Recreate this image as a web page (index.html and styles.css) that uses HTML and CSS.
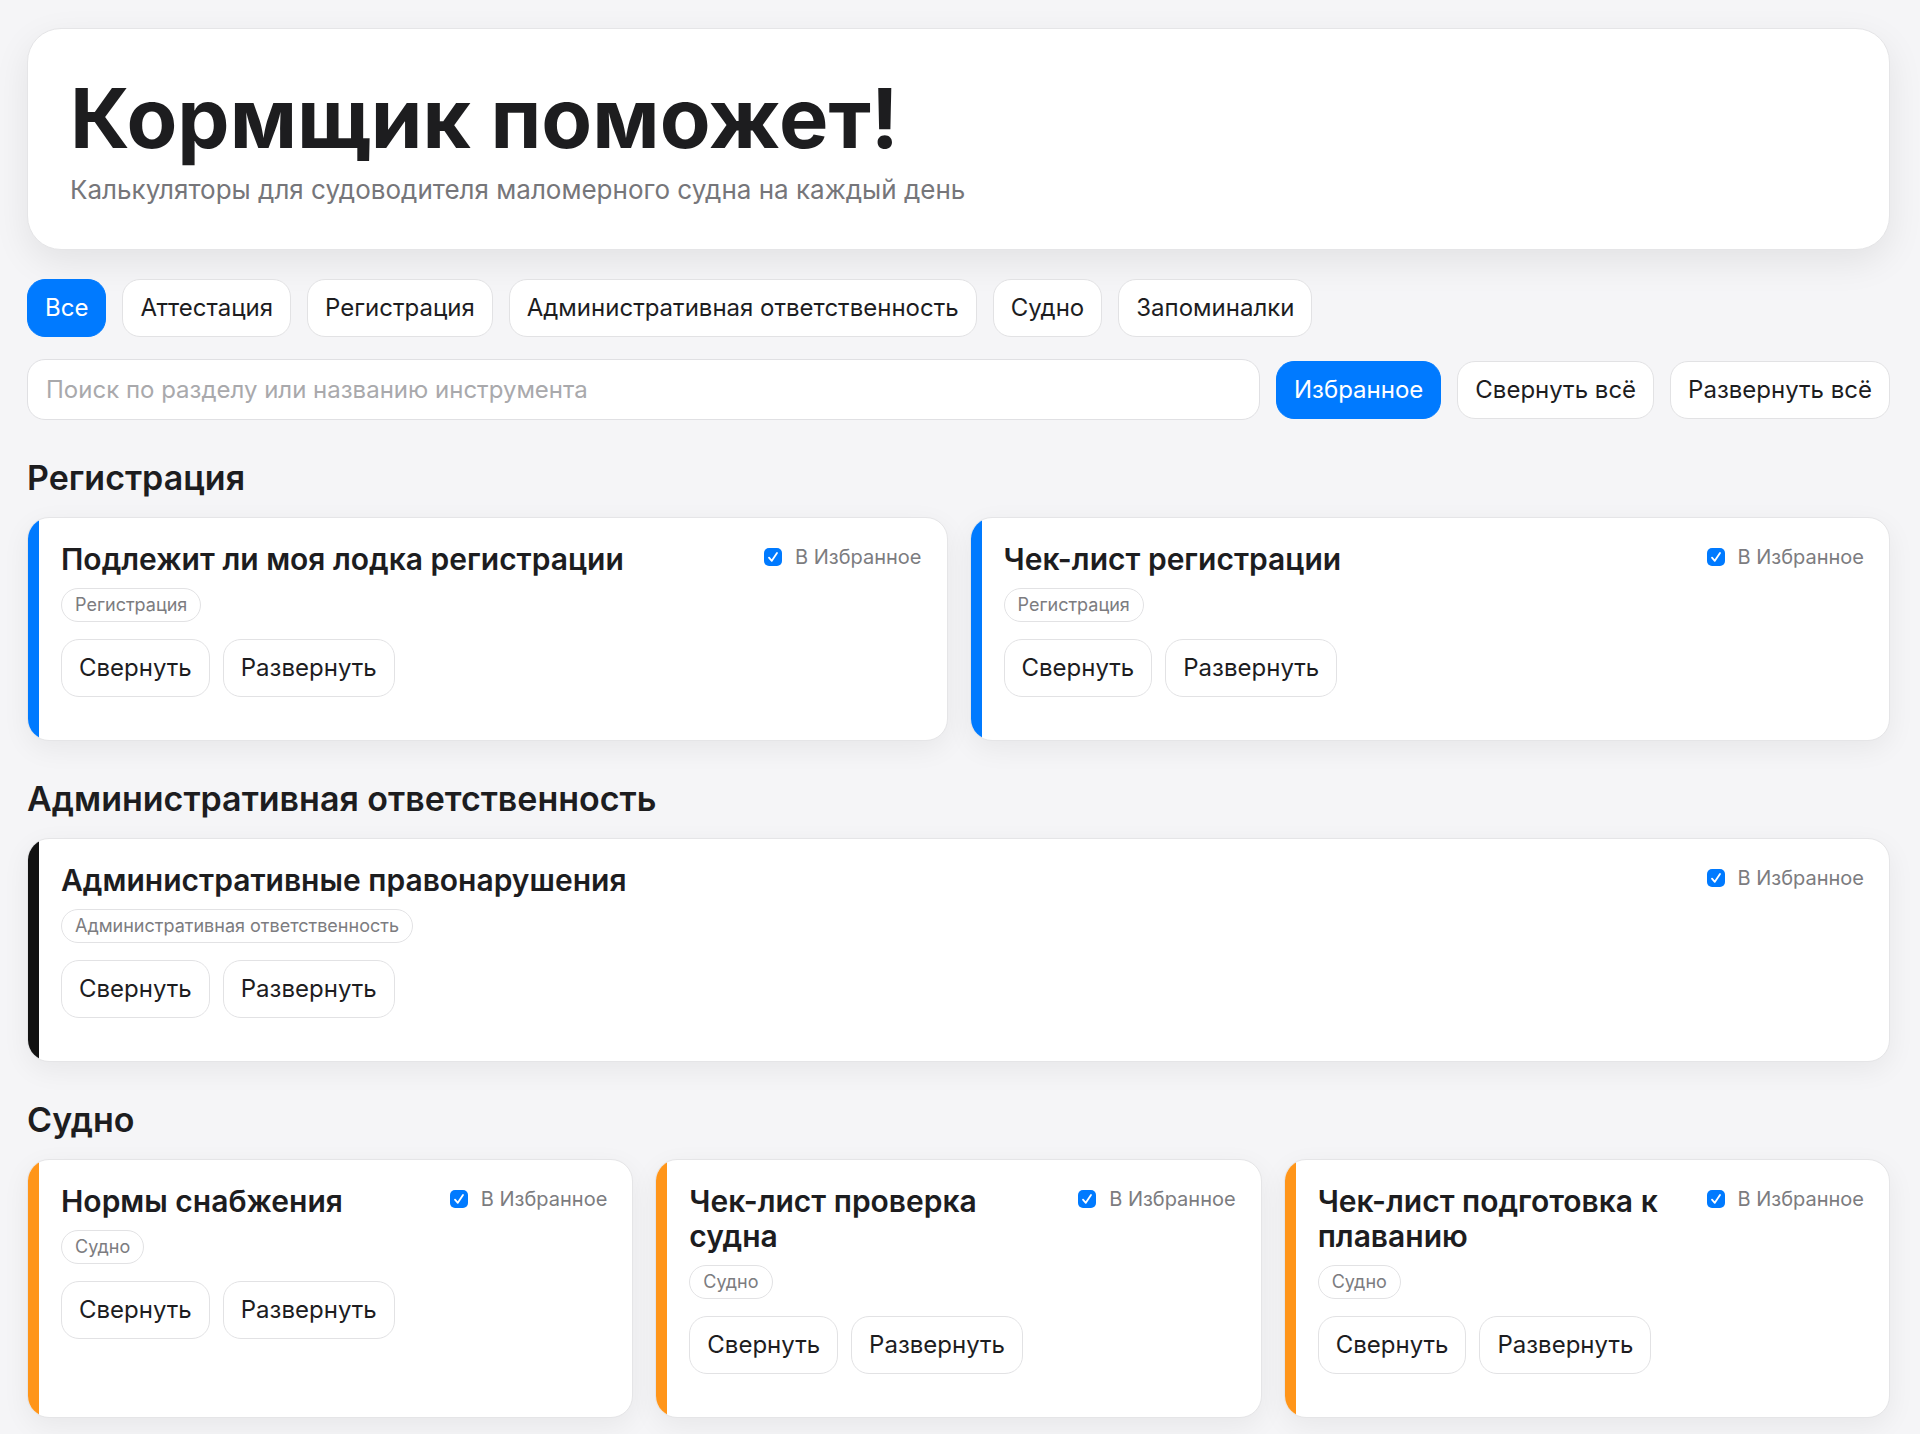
FILE: index.html
```html
<!DOCTYPE html>
<html lang="ru">
<head>
    <meta charset="UTF-8">
    <meta name="viewport" content="width=device-width, initial-scale=1.0">
    <title>Кормщик поможет!</title>
    <link rel="stylesheet" href="styles.css">
</head>
<body>
    <div class="container">
        <header class="hero">
            <h1>Кормщик поможет!</h1>
            <p>Калькуляторы для судоводителя маломерного судна на каждый день</p>
        </header>

        <nav class="filters">
            <button type="button" class="btn active">Все</button>
            <button type="button" class="btn">Аттестация</button>
            <button type="button" class="btn">Регистрация</button>
            <button type="button" class="btn">Административная ответственность</button>
            <button type="button" class="btn">Судно</button>
            <button type="button" class="btn">Запоминалки</button>
        </nav>

        <div class="toolbar">
            <input type="search" id="search" class="search" placeholder="Поиск по разделу или названию инструмента" aria-label="Поиск">
            <button type="button" class="btn active">Избранное</button>
            <button type="button" class="btn">Свернуть всё</button>
            <button type="button" class="btn">Развернуть всё</button>
        </div>

        <section class="section">
            <h2>Регистрация</h2>
            <div class="cards">
                <article class="card blue">
                    <div class="card-head">
                        <h3>Подлежит ли моя лодка регистрации</h3>
                        <label class="fav" for="fav1"><input type="checkbox" id="fav1" checked> В Избранное</label>
                    </div>
                    <span class="tag">Регистрация</span>
                    <div class="actions">
                        <button type="button" class="btn">Свернуть</button>
                        <button type="button" class="btn">Развернуть</button>
                    </div>
                </article>
                <article class="card blue">
                    <div class="card-head">
                        <h3>Чек-лист регистрации</h3>
                        <label class="fav" for="fav2"><input type="checkbox" id="fav2" checked> В Избранное</label>
                    </div>
                    <span class="tag">Регистрация</span>
                    <div class="actions">
                        <button type="button" class="btn">Свернуть</button>
                        <button type="button" class="btn">Развернуть</button>
                    </div>
                </article>
            </div>
        </section>

        <section class="section">
            <h2>Административная ответственность</h2>
            <div class="cards">
                <article class="card black">
                    <div class="card-head">
                        <h3>Административные правонарушения</h3>
                        <label class="fav" for="fav3"><input type="checkbox" id="fav3" checked> В Избранное</label>
                    </div>
                    <span class="tag">Административная ответственность</span>
                    <div class="actions">
                        <button type="button" class="btn">Свернуть</button>
                        <button type="button" class="btn">Развернуть</button>
                    </div>
                </article>
            </div>
        </section>

        <section class="section">
            <h2>Судно</h2>
            <div class="cards">
                <article class="card orange">
                    <div class="card-head">
                        <h3>Нормы снабжения</h3>
                        <label class="fav" for="fav4"><input type="checkbox" id="fav4" checked> В Избранное</label>
                    </div>
                    <span class="tag">Судно</span>
                    <div class="actions">
                        <button type="button" class="btn">Свернуть</button>
                        <button type="button" class="btn">Развернуть</button>
                    </div>
                </article>
                <article class="card orange">
                    <div class="card-head">
                        <h3>Чек-лист проверка судна</h3>
                        <label class="fav" for="fav5"><input type="checkbox" id="fav5" checked> В Избранное</label>
                    </div>
                    <span class="tag">Судно</span>
                    <div class="actions">
                        <button type="button" class="btn">Свернуть</button>
                        <button type="button" class="btn">Развернуть</button>
                    </div>
                </article>
                <article class="card orange">
                    <div class="card-head">
                        <h3>Чек-лист подготовка к плаванию</h3>
                        <label class="fav" for="fav6"><input type="checkbox" id="fav6" checked> В Избранное</label>
                    </div>
                    <span class="tag">Судно</span>
                    <div class="actions">
                        <button type="button" class="btn">Свернуть</button>
                        <button type="button" class="btn">Развернуть</button>
                    </div>
                </article>
            </div>
        </section>
    </div>
</body>
</html>
```
FILE: styles.css
```css
* {
    box-sizing: border-box;
}

body {
    margin: 0;
    background: #f5f5f7;
    color: #1d1d1f;
    font-family: Inter, "Liberation Sans", sans-serif;
}

h1, h2, h3, p {
    margin: 0;
}

.container {
    padding: 28px 30px 16px 27px;
}

.hero {
    padding: 42px;
    background: #fff;
    border: 1px solid #e5e5e7;
    border-radius: 34px;
    box-shadow: 0 12px 36px rgba(0, 0, 0, 0.08);
}

.hero h1 {
    font-size: 83px;
    line-height: 94px;
    font-weight: 700;
}

.hero p {
    margin-top: 8px;
    font-size: 26px;
    line-height: 34px;
    color: #76767a;
}

.filters {
    display: flex;
    flex-wrap: wrap;
    gap: 16px;
    margin-top: 29px;
}

.btn {
    height: 58px;
    padding: 0 17px;
    border: 1px solid #e2e2e4;
    border-radius: 18px;
    background: #fff;
    color: #1d1d1f;
    font-family: inherit;
    font-size: 24px;
    line-height: 30px;
    white-space: nowrap;
    cursor: pointer;
}

.btn.active {
    background: #007aff;
    border-color: #007aff;
    color: #fff;
}

.toolbar {
    display: flex;
    align-items: center;
    gap: 16px;
    margin-top: 22px;
    margin-bottom: 37px;
}

.search {
    flex: 1;
    min-width: 0;
    height: 61px;
    padding: 0 18px;
    border: 1px solid #e0e0e3;
    border-radius: 18px;
    background: #fff;
    color: #1d1d1f;
    font-family: inherit;
    font-size: 24px;
}

.search::placeholder {
    color: #a9a9ac;
}

.section + .section {
    margin-top: 37px;
}

.section h2 {
    margin-bottom: 18px;
    font-size: 34px;
    line-height: 42px;
    font-weight: 600;
}

.cards {
    display: grid;
    grid-auto-flow: column;
    grid-auto-columns: minmax(0, 1fr);
    gap: 22px;
}

.card {
    position: relative;
    overflow: hidden;
    padding: 24px 25px 43px 33px;
    background: #fff;
    border: 1px solid #e5e5e7;
    border-radius: 22px;
    box-shadow: 0 8px 28px rgba(0, 0, 0, 0.06);
}

/* colour stripe of the section */
.card::before {
    content: "";
    position: absolute;
    top: 0;
    bottom: 0;
    left: 0;
    width: 11px;
}

.card.blue::before {
    background: #007aff;
}

.card.black::before {
    background: #111;
}

.card.orange::before {
    background: #ff9519;
}

.card-head {
    display: flex;
    justify-content: space-between;
    align-items: flex-start;
    gap: 16px;
}

.card h3 {
    font-size: 30px;
    line-height: 35px;
    font-weight: 600;
}

.fav {
    display: flex;
    align-items: center;
    gap: 13px;
    flex-shrink: 0;
    line-height: 30px;
    font-size: 20px;
    color: #7c7c80;
}

.fav input {
    appearance: none;
    width: 18px;
    height: 18px;
    margin: 0;
    border-radius: 5px;
    border: 1px solid #c7c7cc;
    background: #fff;
}

.fav input:checked {
    border: none;
    background: #007aff url("data:image/svg+xml,%3Csvg xmlns='http://www.w3.org/2000/svg' viewBox='0 0 18 18'%3E%3Cpath d='M5 9.6l2.8 3.2L13 5' fill='none' stroke='white' stroke-width='1.8' stroke-linecap='round' stroke-linejoin='round'/%3E%3C/svg%3E") center / 100%;
}

.tag {
    display: table;
    margin-top: 11px;
    padding: 4px 13px;
    border: 1px solid #e2e2e4;
    border-radius: 17px;
    font-size: 18px;
    line-height: 24px;
    color: #7c7c80;
}

.actions {
    display: flex;
    flex-wrap: wrap;
    gap: 13px;
    margin-top: 17px;
}
```
